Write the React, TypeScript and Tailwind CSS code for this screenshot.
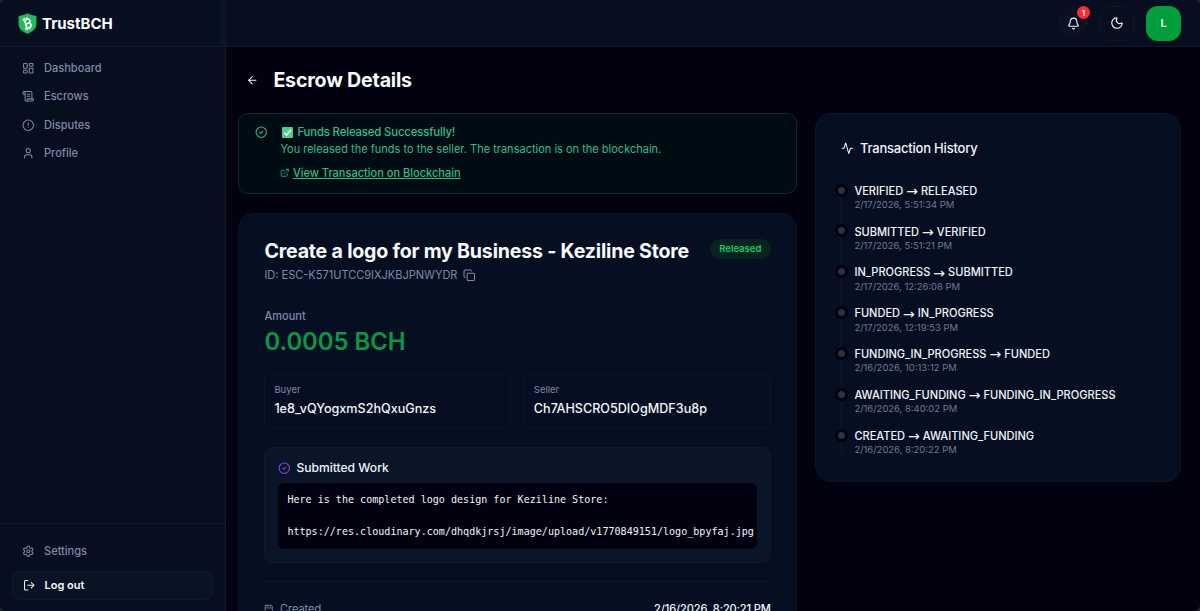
import type { ReactNode } from "react";
import {
  Activity,
  ArrowLeft,
  Bell,
  Bitcoin,
  Calendar,
  CircleAlert,
  CircleCheck,
  Copy,
  ExternalLink,
  LayoutDashboard,
  LogOut,
  Moon,
  ScrollText,
  Settings,
  User,
} from "lucide-react";

const navItems = [
  { label: "Dashboard", icon: LayoutDashboard },
  { label: "Escrows", icon: ScrollText },
  { label: "Disputes", icon: CircleAlert },
  { label: "Profile", icon: User },
];

const history = [
  { from: "VERIFIED", to: "RELEASED", at: "2/17/2026, 5:51:34 PM" },
  { from: "SUBMITTED", to: "VERIFIED", at: "2/17/2026, 5:51:21 PM" },
  { from: "IN_PROGRESS", to: "SUBMITTED", at: "2/17/2026, 12:26:08 PM" },
  { from: "FUNDED", to: "IN_PROGRESS", at: "2/17/2026, 12:19:53 PM" },
  { from: "FUNDING_IN_PROGRESS", to: "FUNDED", at: "2/16/2026, 10:13:12 PM" },
  { from: "AWAITING_FUNDING", to: "FUNDING_IN_PROGRESS", at: "2/16/2026, 8:40:02 PM" },
  { from: "CREATED", to: "AWAITING_FUNDING", at: "2/16/2026, 8:20:22 PM" },
];

function Logo() {
  return (
    <div className="relative h-[21px] w-[19px]">
      <svg viewBox="0 0 19 21" className="h-full w-full">
        <path
          d="M9.5 0.3C12 1.9 15 2.7 18.4 2.9V11C18.4 15.8 14.6 18.9 9.5 20.7C4.4 18.9 0.6 15.8 0.6 11V2.9C4 2.7 7 1.9 9.5 0.3Z"
          fill="#1fbd59"
        />
      </svg>
      <Bitcoin className="absolute top-[3px] left-[2px] h-[15px] w-[15px] -rotate-[26deg] text-white" strokeWidth={2.6} />
    </div>
  );
}

function Sidebar() {
  return (
    <aside className="flex w-[226px] shrink-0 flex-col border-r border-[#0f1b2d] bg-[#070e20]">
      <div className="flex h-[47px] shrink-0 items-center gap-[5px] border-b border-[#0e1a2b] pl-[18px]">
        <Logo />
        <span className="pt-[2px] text-[15px] font-bold text-white">TrustBCH</span>
        <span className="ml-auto h-full w-[5px] bg-[#0a1526]" />
      </div>
      <nav className="flex flex-col pt-[7.4px]">
        {navItems.map(({ label, icon: Icon }) => (
          <a key={label} className="flex h-[28.2px] items-center gap-[9.5px] pl-[22px] text-[11.05px] font-medium text-[#7c8aa5]">
            <Icon className="h-[12.5px] w-[12.5px]" strokeWidth={2} />
            {label}
          </a>
        ))}
      </nav>
      <div className="mt-auto flex h-[88px] flex-col border-t border-[#0e1a2b] px-3 pt-[13px]">
        <a className="flex h-[28px] items-center gap-[9.5px] pl-[10px] text-[11.05px] font-medium text-[#7c8aa5]">
          <Settings className="h-[12.5px] w-[12.5px]" strokeWidth={2} />
          Settings
        </a>
        <button className="mt-[6px] flex h-[29px] w-[201px] items-center gap-[9px] rounded-[7px] border border-[#0e1a2b] bg-[#091323] pl-[10px] text-[11px] font-semibold text-[#f1f5f9]">
          <LogOut className="h-[12.5px] w-[12.5px]" strokeWidth={2} />
          Log out
        </button>
      </div>
    </aside>
  );
}

function Header() {
  return (
    <header className="flex h-[47px] shrink-0 items-center justify-end border-b border-[#0e1a2b] bg-[#070e20] pr-[19px] text-[#f1f5f9]">
      <button className="relative flex h-[28px] w-[28px] items-center justify-center rounded-full border border-[#0d1829] bg-[#091222]">
        <Bell className="h-[13px] w-[13px]" strokeWidth={2} />
        <span className="absolute -top-[4px] -right-[4px] flex h-[13px] w-[13px] items-center justify-center rounded-full bg-[#fb2c36] text-[8px] font-semibold text-white">
          1
        </span>
      </button>
      <button className="ml-3 flex h-[35px] w-[35px] items-center justify-center rounded-[11px] border border-[#0d1829] bg-[#070f1f]">
        <Moon className="h-[14px] w-[14px]" strokeWidth={2} />
      </button>
      <div className="ml-3 flex h-[35px] w-[35px] items-center justify-center rounded-[12px] bg-[#009f3c] text-[11px] font-semibold">
        L
      </div>
    </header>
  );
}

function ReleasedAlert() {
  return (
    <section className="flex h-[81px] rounded-[10px] border border-[#0b2b2b] bg-[#010b13] pt-[10px] pl-[15.5px] text-[#2fbf85]">
      <CircleCheck className="mt-[2px] h-[12.5px] w-[12.5px]" strokeWidth={2} />
      <div className="ml-[13px]">
        <p className="flex h-[17px] items-center pl-[1.5px] text-[11.4px] font-medium tracking-[-0.17px] whitespace-nowrap">
          <svg viewBox="0 0 12 12" className="mr-[4.5px] h-[11px] w-[11px]">
            <rect width="12" height="12" rx="1" fill="#4fce85" />
            <path d="M2.5 6.3 5 8.8 9.8 3" fill="none" stroke="#fff" strokeWidth="1.6" />
          </svg>
          Funds Released Successfully!
        </p>
        <p className="text-[11.03px] leading-[17px] whitespace-nowrap">
          You released the funds to the seller. The transaction is on the blockchain.
        </p>
        <a className="mt-[6px] flex h-[18px] items-center gap-[3px] text-[11.03px] font-medium">
          <ExternalLink className="h-[9.5px] w-[9.5px]" strokeWidth={2} />
          <span className="underline">View Transaction on Blockchain</span>
        </a>
      </div>
    </section>
  );
}

function Party({ label, name }: { label: string; name: string }) {
  return (
    <div className="h-[55px] rounded-[8px] border border-[#0c1828] pt-[8.5px] pl-[9px]">
      <p className="text-[9.5px] leading-[13px] text-[#7c8aa5]">{label}</p>
      <p className="mt-[3.5px] text-[12.6px] leading-[18px] font-medium text-[#f1f5f9]">{name}</p>
    </div>
  );
}

function Card({ className, children }: { className: string; children: ReactNode }) {
  return <section className={`rounded-[16px] border border-[#0c1828] bg-[#060f21] ${className}`}>{children}</section>;
}

function EscrowCard() {
  return (
    <Card className="mt-[19px] h-[480px] px-[25px] pt-[25px]">
      <div className="flex justify-between">
        <h2 className="text-[19.6px] leading-[25px] font-bold tracking-[-0.2px] whitespace-nowrap text-[#f8fafc]">
          Create a logo for my Business - Keziline Store
        </h2>
        <span className="flex h-[20px] w-[61px] items-center justify-center rounded-full bg-[#06231f] text-[9.5px] font-semibold text-[#14cd65]">
          Released
        </span>
      </div>
      <p className="mt-[3px] flex h-[16px] items-center gap-[6px] text-[11.02px] text-[#7c8aa5]">
        ID: ESC-K571UTCC9IXJKBJPNWYDR
        <Copy className="h-[12.5px] w-[12.5px]" strokeWidth={2} />
      </p>
      <p className="mt-[24.5px] text-[11.02px] leading-[16px] font-medium text-[#7c8aa5]">Amount</p>
      <p className="mt-[2px] text-[23.85px] leading-[32px] font-semibold text-[#0a9844]">0.0005 BCH</p>

      <div className="mt-[16px] grid grid-cols-2 gap-[12.5px]">
        <Party label="Buyer" name="1e8_vQYogxmS2hQxuGnzs" />
        <Party label="Seller" name="Ch7AHSCRO5DIOgMDF3u8p" />
      </div>

      <div className="mt-[18.5px] h-[116px] rounded-[8px] border border-[#0d1a2a] bg-[#0a1527] px-[12.5px] pt-[12px]">
        <h3 className="flex h-[17px] items-center gap-[6px] text-[12.1px] font-medium text-[#f1f5f9]">
          <CircleCheck className="h-[12.5px] w-[12.5px] text-[#9141dc]" strokeWidth={2} />
          Submitted Work
        </h3>
        <pre className="mt-[6px] h-[66px] overflow-hidden rounded-[6px] bg-[#01010f] pt-[9px] pl-[9.5px] font-['DejaVu_Sans_Mono',monospace] text-[10.07px] leading-[15.75px] text-[#f1f5f9]">
          {"Here is the completed logo design for Keziline Store:\n\nhttps://res.cloudinary.com/dhqdkjrsj/image/upload/v1770849151/logo_bpyfaj.jpg"}
        </pre>
      </div>

      <div className="mt-[18px] flex items-center justify-between border-t border-[#0c1828] pt-[19px] text-[11.02px] leading-[16px]">
        <span className="flex items-center gap-[6px] text-[#7c8aa5]">
          <Calendar className="h-[9.5px] w-[9.5px]" strokeWidth={2} />
          Created
        </span>
        <span className="font-medium tracking-[-0.1px] text-[#f1f5f9]">2/16/2026, 8:20:21 PM</span>
      </div>
    </Card>
  );
}

function TransactionHistory() {
  return (
    <Card className="h-[369px] px-[25px] pt-[26px]">
      <h2 className="flex h-[17px] items-center gap-[6px] text-[13px] font-medium tracking-[-0.2px] text-[#f1f5f9]">
        <Activity className="h-[12.5px] w-[12.5px]" strokeWidth={2} />
        Transaction History
      </h2>
      <ol className="mt-[25px] border-l border-[#0d1a2a]">
        {history.map((item) => (
          <li key={item.at} className="relative h-[40.85px] pl-[12px] last:h-[28px]">
            <span className="absolute top-[1.5px] -left-[7px] h-[13px] w-[13px] rounded-full border-[3px] border-[#01010f] bg-[#2c3240]" />
            <p className="flex h-[16px] items-center gap-[3px] pt-[2px] text-[11.05px] font-medium whitespace-nowrap text-[#f1f5f9]">
              <span>{item.from}</span>
              <span className="font-['DejaVu_Sans',sans-serif] text-[14px] leading-none font-normal">→</span>
              <span>{item.to}</span>
            </p>
            <p className="text-[9.45px] leading-[13px] text-[#6c7a94]">{item.at}</p>
          </li>
        ))}
      </ol>
    </Card>
  );
}

export default function App() {
  return (
    <div className="h-[611px] w-[1200px] overflow-hidden bg-[#24272d] font-['Inter',sans-serif]">
      <div className="flex h-full overflow-hidden rounded-[6px] bg-[#01010f]">
        <Sidebar />
        <div className="flex min-w-0 flex-1 flex-col">
          <Header />
          <main className="flex-1 overflow-hidden pr-[19px] pl-[12.4px]">
            <div className="flex h-[66px] items-center gap-[14.5px] pl-[8px] text-[#f8fafc]">
              <ArrowLeft className="h-[12.5px] w-[12.5px]" strokeWidth={2} />
              <h1 className="pt-px text-[19.6px] font-bold tracking-[-0.18px]">Escrow Details</h1>
            </div>
            <div className="grid grid-cols-[558.4px_1fr] gap-[18.6px]">
              <div>
                <ReleasedAlert />
                <EscrowCard />
              </div>
              <TransactionHistory />
            </div>
          </main>
        </div>
      </div>
    </div>
  );
}
